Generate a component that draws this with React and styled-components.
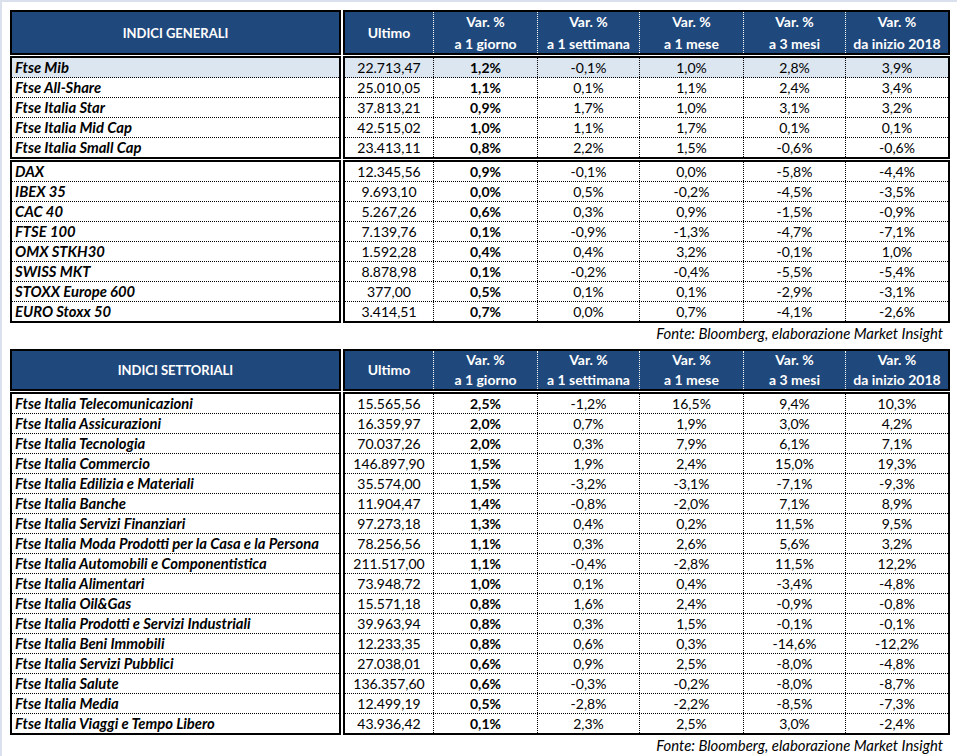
import styled, { createGlobalStyle } from 'styled-components';

const GlobalStyle = createGlobalStyle`
  html, body {
    margin: 0;
    padding: 0;
    background: #ffffff;
  }
  body {
    font-family: Lato, "Open Sans", "Liberation Sans", sans-serif;
    font-size: 14px;
    color: #000000;
  }
`;

const Page = styled.div`
  width: 957px;
  height: 756px;
  box-sizing: border-box;
  border-top: 2px solid #dae1ec;
  border-left: 2px solid #dae1ec;
  padding: 8px 0 0 8px;
  overflow: hidden;
`;

const Table = styled.div`
  display: grid;
  grid-template-columns: 331px 607px;
  column-gap: 2px;
  row-gap: 1px;
  width: 940px;
`;

const Box = styled.div`
  box-sizing: border-box;
  border: 2px solid #000000;
  background: ${({ $head }) => ($head ? '#1f497d' : '#ffffff')};
  color: ${({ $head }) => ($head ? '#ffffff' : '#000000')};
`;

const NameHead = styled(Box)`
  height: ${({ $h }) => $h}px;
  display: flex;
  align-items: center;
  justify-content: center;
  font-weight: 700;
  font-size: 13px;
`;

const DataHead = styled(Box)`
  height: ${({ $h }) => $h}px;
  display: grid;
  grid-template-columns: 89px 104px 102px 104px 102px 1fr;
`;

const HeadCell = styled.div`
  box-sizing: border-box;
  display: flex;
  flex-direction: column;
  align-items: center;
  justify-content: center;
  gap: ${({ $gap }) => $gap}px;
  font-weight: 700;
  font-size: 14px;
  line-height: 16px;
  border-right: 1px dotted #ffffff;
  &:last-child {
    border-right: none;
  }
`;

const NameRow = styled.div`
  box-sizing: border-box;
  height: 20px;
  line-height: 19px;
  padding-left: 3px;
  font-weight: 700;
  font-style: italic;
  font-size: 14.8px;
  white-space: nowrap;
  background: ${({ $hl }) => ($hl ? '#dce6f1' : 'transparent')};
  border-bottom: 1px dotted #000000;
  &:last-child {
    border-bottom: none;
    height: 19px;
  }
`;

const DataRow = styled.div`
  box-sizing: border-box;
  height: 20px;
  display: grid;
  grid-template-columns: 89px 104px 102px 104px 102px 1fr;
  background: ${({ $hl }) => ($hl ? '#dce6f1' : 'transparent')};
  border-bottom: 1px dotted #000000;
  &:last-child {
    border-bottom: none;
    height: 19px;
  }
`;

const Cell = styled.div`
  box-sizing: border-box;
  text-align: center;
  line-height: 19px;
  font-weight: ${({ $bold }) => ($bold ? 700 : 400)};
  border-right: 1px dotted #000000;
  &:last-child {
    border-right: none;
  }
`;

const Source = styled.div`
  width: 940px;
  height: 20px;
  line-height: 20px;
  box-sizing: border-box;
  padding-right: 7px;
  text-align: right;
  font-style: italic;
  font-size: 14.9px;
  margin-bottom: ${({ $mb }) => $mb}px;
`;

const heads = [
  ['Ultimo'],
  ['Var. %', 'a 1 giorno'],
  ['Var. %', 'a 1 settimana'],
  ['Var. %', 'a 1 mese'],
  ['Var. %', 'a 3 mesi'],
  ['Var. %', 'da inizio 2018'],
];

const italia = [
  ['Ftse Mib', '22.713,47', '1,2%', '-0,1%', '1,0%', '2,8%', '3,9%'],
  ['Ftse All-Share', '25.010,05', '1,1%', '0,1%', '1,1%', '2,4%', '3,4%'],
  ['Ftse Italia Star', '37.813,21', '0,9%', '1,7%', '1,0%', '3,1%', '3,2%'],
  ['Ftse Italia Mid Cap', '42.515,02', '1,0%', '1,1%', '1,7%', '0,1%', '0,1%'],
  ['Ftse Italia Small Cap', '23.413,11', '0,8%', '2,2%', '1,5%', '-0,6%', '-0,6%'],
];

const esteri = [
  ['DAX', '12.345,56', '0,9%', '-0,1%', '0,0%', '-5,8%', '-4,4%'],
  ['IBEX 35', '9.693,10', '0,0%', '0,5%', '-0,2%', '-4,5%', '-3,5%'],
  ['CAC 40', '5.267,26', '0,6%', '0,3%', '0,9%', '-1,5%', '-0,9%'],
  ['FTSE 100', '7.139,76', '0,1%', '-0,9%', '-1,3%', '-4,7%', '-7,1%'],
  ['OMX STKH30', '1.592,28', '0,4%', '0,4%', '3,2%', '-0,1%', '1,0%'],
  ['SWISS MKT', '8.878,98', '0,1%', '-0,2%', '-0,4%', '-5,5%', '-5,4%'],
  ['STOXX Europe 600', '377,00', '0,5%', '0,1%', '0,1%', '-2,9%', '-3,1%'],
  ['EURO Stoxx 50', '3.414,51', '0,7%', '0,0%', '0,7%', '-4,1%', '-2,6%'],
];

const settori = [
  ['Ftse Italia Telecomunicazioni', '15.565,56', '2,5%', '-1,2%', '16,5%', '9,4%', '10,3%'],
  ['Ftse Italia Assicurazioni', '16.359,97', '2,0%', '0,7%', '1,9%', '3,0%', '4,2%'],
  ['Ftse Italia Tecnologia', '70.037,26', '2,0%', '0,3%', '7,9%', '6,1%', '7,1%'],
  ['Ftse Italia Commercio', '146.897,90', '1,5%', '1,9%', '2,4%', '15,0%', '19,3%'],
  ['Ftse Italia Edilizia e Materiali', '35.574,00', '1,5%', '-3,2%', '-3,1%', '-7,1%', '-9,3%'],
  ['Ftse Italia Banche', '11.904,47', '1,4%', '-0,8%', '-2,0%', '7,1%', '8,9%'],
  ['Ftse Italia Servizi Finanziari', '97.273,18', '1,3%', '0,4%', '0,2%', '11,5%', '9,5%'],
  ['Ftse Italia Moda Prodotti per la Casa e la Persona', '78.256,56', '1,1%', '0,3%', '2,6%', '5,6%', '3,2%'],
  ['Ftse Italia Automobili e Componentistica', '211.517,00', '1,1%', '-0,4%', '-2,8%', '11,5%', '12,2%'],
  ['Ftse Italia Alimentari', '73.948,72', '1,0%', '0,1%', '0,4%', '-3,4%', '-4,8%'],
  ['Ftse Italia Oil&Gas', '15.571,18', '0,8%', '1,6%', '2,4%', '-0,9%', '-0,8%'],
  ['Ftse Italia Prodotti e Servizi Industriali', '39.963,94', '0,8%', '0,3%', '1,5%', '-0,1%', '-0,1%'],
  ['Ftse Italia Beni Immobili', '12.233,35', '0,8%', '0,6%', '0,3%', '-14,6%', '-12,2%'],
  ['Ftse Italia Servizi Pubblici', '27.038,01', '0,6%', '0,9%', '2,5%', '-8,0%', '-4,8%'],
  ['Ftse Italia Salute', '136.357,60', '0,6%', '-0,3%', '-0,2%', '-8,0%', '-8,7%'],
  ['Ftse Italia Media', '12.499,19', '0,5%', '-2,8%', '-2,2%', '-8,5%', '-7,3%'],
  ['Ftse Italia Viaggi e Tempo Libero', '43.936,42', '0,1%', '2,3%', '2,5%', '3,0%', '-2,4%'],
];

const Group = ({ rows, highlightFirst }) => (
  <>
    <Box>
      {rows.map((r, i) => (
        <NameRow key={r[0]} $hl={highlightFirst && i === 0}>{r[0]}</NameRow>
      ))}
    </Box>
    <Box>
      {rows.map((r, i) => (
        <DataRow key={r[0]} $hl={highlightFirst && i === 0}>
          {r.slice(1).map((v, j) => (
            <Cell key={j} $bold={j === 1}>{v}</Cell>
          ))}
        </DataRow>
      ))}
    </Box>
  </>
);

const Header = ({ title, h, gap }) => (
  <>
    <NameHead $head $h={h}>{title}</NameHead>
    <DataHead $head $h={h}>
      {heads.map((lines, i) => (
        <HeadCell key={i} $gap={gap}>
          {lines.map((l) => <span key={l}>{l}</span>)}
        </HeadCell>
      ))}
    </DataHead>
  </>
);

const App = () => (
  <Page>
    <GlobalStyle />
    <Table>
      <Header title="INDICI GENERALI" h={45} gap={6} />
      <Group rows={italia} highlightFirst />
      <Group rows={esteri} />
    </Table>
    <Source $mb={6}>Fonte: Bloomberg, elaborazione Market Insight</Source>
    <Table>
      <Header title="INDICI SETTORIALI" h={42} gap={4} />
      <Group rows={settori} />
    </Table>
    <Source $mb={0}>Fonte: Bloomberg, elaborazione Market Insight</Source>
  </Page>
);

export default App;
